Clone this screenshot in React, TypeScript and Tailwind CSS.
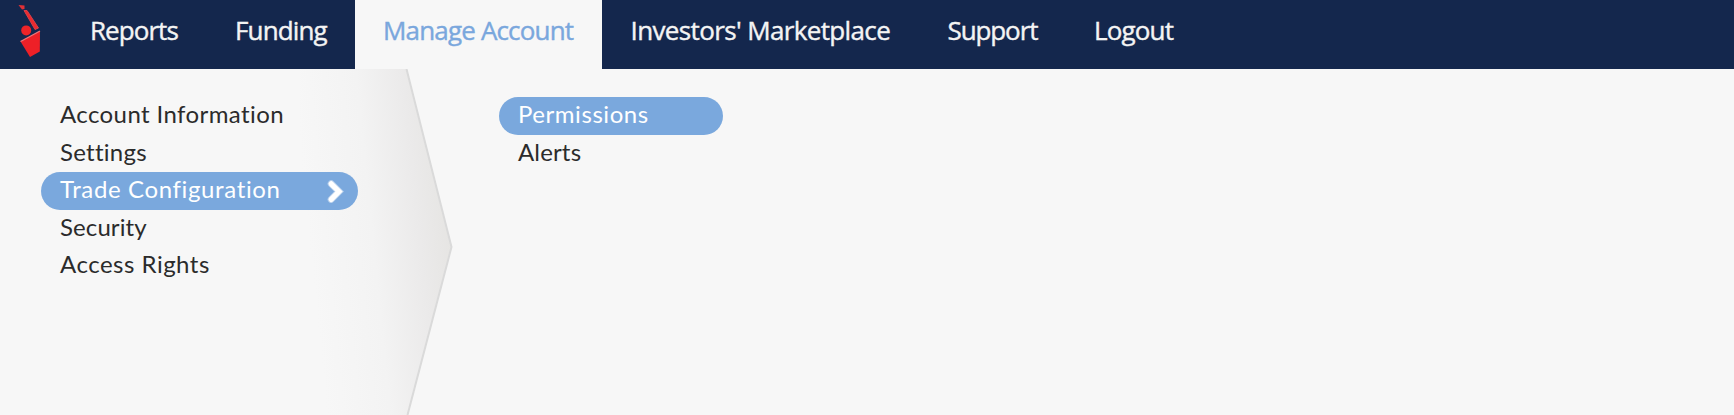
const nav = [
  { label: "Reports", cls: "w-[145px] pl-[26px] tracking-[-0.95px]" },
  { label: "Funding", cls: "w-[146px] pl-[26px] tracking-[-0.86px]" },
  { label: "Manage Account", cls: "w-[247px] pl-[28px] tracking-[-0.83px] bg-[#f7f7f7] text-[#7aa7dd]" },
  { label: "Investors' Marketplace", cls: "w-[317px] pl-[28.5px] tracking-[-0.63px]" },
  { label: "Support", cls: "w-[147px] pl-[28.5px] tracking-[-1.1px]" },
  { label: "Logout", cls: "w-[140px] pl-[28px] tracking-[-0.85px]" },
];

const primary = [
  { label: "Account Information", cls: "tracking-[0.4px]" },
  { label: "Settings", cls: "tracking-[0.25px]" },
  { label: "Trade Configuration", cls: "tracking-[0.63px]", active: true },
  { label: "Security", cls: "tracking-[0.1px]" },
  { label: "Access Rights", cls: "tracking-[0.5px]" },
];

const secondary = [
  { label: "Permissions", cls: "tracking-[0.55px]", active: true },
  { label: "Alerts", cls: "tracking-[0.15px]" },
];

type Item = { label: string; cls: string; active?: boolean };

function Menu({ items, chevron }: { items: Item[]; chevron?: boolean }) {
  return (
    <ul className="relative font-['Lato',sans-serif] text-[24px] leading-[34px]">
      {items.map((item) => (
        <li key={item.label} className="h-[37.5px]">
          <a
            className={`flex h-[38px] items-start justify-between whitespace-nowrap rounded-full pl-[19px] pr-[13px] ${
              item.active ? "bg-[#7aa8dd] text-white" : "text-[#2b2b2b]"
            }`}
          >
            <span className={item.cls}>{item.label}</span>
            {chevron && item.active && (
              <svg className="mt-[7px] h-[25px] w-[18px]" viewBox="0 0 18 25" fill="none">
                <path d="M4.2 4.8 L12 12.5 L4.2 20.4" stroke="white" strokeOpacity=".45" strokeWidth="7" strokeLinecap="round" />
                <path d="M4.2 4.8 L12 12.5 L4.2 20.4" stroke="white" strokeWidth="5.2" strokeLinecap="round" />
              </svg>
            )}
          </a>
        </li>
      ))}
    </ul>
  );
}

function Logo() {
  return (
    <svg className="h-[69px] w-[64px]" viewBox="0 0 64 69">
      <path d="M18.5 5 L24.5 5.5 L24.5 9 L22 9.5 Z" fill="#e13036" />
      <path d="M24 10.5 L27 10.5 L38.5 28 L35 29.5 Z" fill="#ed2a2e" stroke="#d8404a" strokeWidth="1" />
      <circle cx="26.2" cy="30.4" r="5" fill="#ee2428" />
      <path d="M20.5 41.5 L40 31 L39.8 51.5 L30 57 Z" fill="#ee2027" />
      <path d="M20.5 41.5 L40 31" stroke="#ef777a" strokeWidth="1.3" />
    </svg>
  );
}

export default function App() {
  return (
    <div className="flex h-[415px] w-[1734px] flex-col overflow-hidden bg-[#f7f7f7]">
      <header className="flex h-[69px] shrink-0 bg-[#14274d] text-[#f4f4f4]">
        <Logo />
        <nav className="flex font-['Open_Sans',sans-serif] text-[26px] leading-[61px] [-webkit-text-stroke:0.4px]">
          {nav.map((item) => (
            <a key={item.label} className={`h-[69px] whitespace-nowrap ${item.cls}`}>
              {item.label}
            </a>
          ))}
        </nav>
      </header>
      <main className="relative flex flex-1 pt-[28px]">
        <svg className="absolute left-[300px] top-0 h-[346px] w-[160px]" viewBox="0 0 160 346">
          <defs>
            <linearGradient id="fold" gradientUnits="userSpaceOnUse" x1="10" y1="178" x2="150" y2="164">
              <stop offset="0" stopColor="#f7f7f7" />
              <stop offset=".45" stopColor="#f3f3f3" />
              <stop offset=".78" stopColor="#ebeaea" />
              <stop offset="1" stopColor="#e6e5e3" />
            </linearGradient>
          </defs>
          <path d="M0 0 H106 L151.5 178 L107.5 346 H0 Z" fill="url(#fold)" />
          <path d="M106.5 0 L151.5 178 L107.5 346" fill="none" stroke="#dadada" strokeWidth="2" />
        </svg>
        <div className="ml-[41px] w-[317px]">
          <Menu items={primary} chevron />
        </div>
        <div className="ml-[141px] w-[224px]">
          <Menu items={secondary} />
        </div>
      </main>
    </div>
  );
}
